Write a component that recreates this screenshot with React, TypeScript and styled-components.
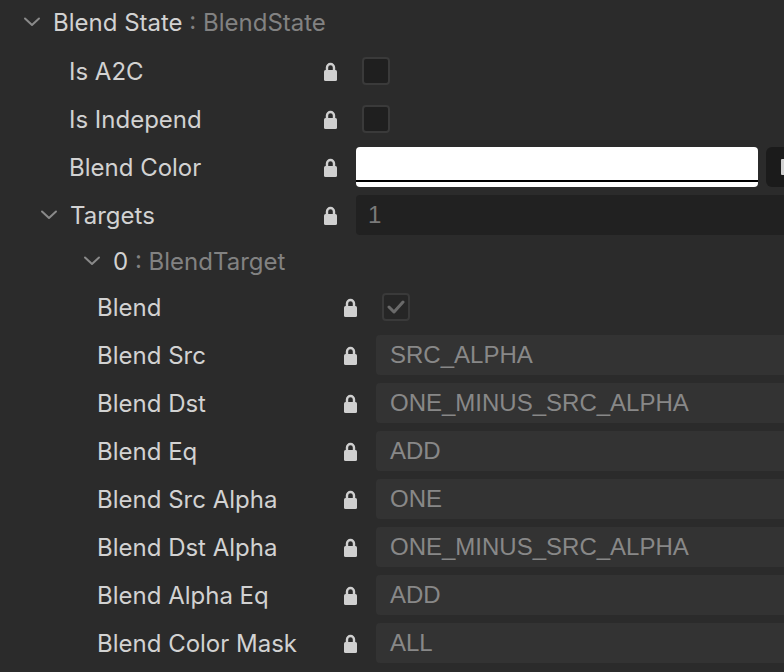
import React from "react";
import styled, { createGlobalStyle } from "styled-components";

const Global = createGlobalStyle`
  html, body { margin: 0; padding: 0; background: #2b2b2b; overflow: hidden; }
  body { width: 784px; height: 672px; }
`;

const Panel = styled.div`
  width: 840px;
  font-family: Inter, "Noto Sans", sans-serif;
  font-size: 24px;
  color: #d2d2d2;
`;

const Children = styled.div<{ $padTop?: number }>`
  display: flex;
  flex-direction: column;
  padding-top: ${(p) => p.$padTop ?? 0}px;
`;

const NodeHeader = styled.div<{ $indent: number }>`
  height: 44px;
  display: flex;
  align-items: center;
  padding-left: ${(p) => p.$indent}px;
  box-sizing: border-box;
`;

const TypeName = styled.span`
  color: #828282;
  white-space: pre;
`;

const ChevronSvg = styled.svg`
  width: 18px;
  height: 10px;
  margin-right: 12px;
  flex: none;
`;

const Row = styled.div`
  height: 48px;
  display: flex;
  align-items: center;
`;

const LabelCell = styled.div<{ $indent: number; $width: number }>`
  width: ${(p) => p.$width}px;
  padding-left: ${(p) => p.$indent}px;
  box-sizing: border-box;
  display: flex;
  align-items: center;
  flex: none;
  white-space: nowrap;
`;

const LockSvg = styled.svg`
  width: 13px;
  height: 19px;
  flex: none;
`;

const ValueCell = styled.div`
  flex: 1;
  margin-left: 19px;
  display: flex;
  align-items: center;
  gap: 8px;
`;

const Checkbox = styled.div<{ $checked?: boolean }>`
  width: 28px;
  height: 28px;
  margin-left: 6px;
  box-sizing: border-box;
  border: 2px solid #3a3a3a;
  border-radius: 4px;
  background: ${(p) => (p.$checked ? "#262626" : "#1f1f1f")};
  display: flex;
  align-items: center;
  justify-content: center;
`;

const Field = styled.div<{ $dark?: boolean }>`
  flex: 1;
  height: 40px;
  border-radius: 4px;
  background: ${(p) => (p.$dark ? "#212121" : "#333333")};
  display: flex;
  align-items: center;
  padding-left: ${(p) => (p.$dark ? 12 : 14)}px;
  box-sizing: border-box;
  font-family: "Liberation Sans", Arial, sans-serif;
  font-size: 24px;
  color: ${(p) => (p.$dark ? "#7a7a7a" : "#888888")};
`;

const ColorSwatch = styled.div`
  width: 402px;
  height: 40px;
  flex: none;
  border-radius: 4px;
  background: linear-gradient(
    to bottom,
    #ffffff 0,
    #ffffff 33px,
    #000000 33px,
    #000000 35px,
    #ffffff 35px
  );
`;

const PickerButton = styled.div`
  width: 60px;
  height: 40px;
  flex: none;
  border-radius: 6px;
  background: #1b1b1b;
  display: flex;
  align-items: center;
  padding-left: 15px;
  box-sizing: border-box;
`;

const PickerIcon = styled.div`
  width: 14px;
  height: 16px;
  background: #d0d0d0;
  border-radius: 1px;
`;

const Chevron = () => (
  <ChevronSvg viewBox="0 0 18 10">
    <path d="M2 1.5 L9 8 L16 1.5" fill="none" stroke="#8a8a8a" strokeWidth="2" strokeLinecap="round" strokeLinejoin="round" />
  </ChevronSvg>
);

const Lock = () => (
  <LockSvg viewBox="0 0 13 19">
    <path d="M3 8 V5.5 A3.5 3.5 0 0 1 10 5.5 V8" fill="none" stroke="#d0d0d0" strokeWidth="2.4" />
    <rect x="0" y="8" width="13" height="11" rx="1.5" fill="#d0d0d0" />
  </LockSvg>
);

const Check = () => (
  <svg width="18" height="14" viewBox="0 0 18 14">
    <path d="M2 7 L7 12 L16 2" fill="none" stroke="#6a6a6a" strokeWidth="3" strokeLinecap="round" strokeLinejoin="round" />
  </svg>
);

type PropRowProps = {
  label: string;
  depth: 1 | 2;
  chevron?: boolean;
  children: React.ReactNode;
};

const PropRow = ({ label, depth, chevron, children }: PropRowProps) => {
  const width = depth === 1 ? 324 : 344;
  const indent = depth === 1 ? (chevron ? 40 : 69) : 97;
  return (
    <Row>
      <LabelCell $indent={indent} $width={width}>
        {chevron && <Chevron />}
        {label}
      </LabelCell>
      <Lock />
      <ValueCell>{children}</ValueCell>
    </Row>
  );
};

const targetProps: [string, string][] = [
  ["Blend Src", "SRC_ALPHA"],
  ["Blend Dst", "ONE_MINUS_SRC_ALPHA"],
  ["Blend Eq", "ADD"],
  ["Blend Src Alpha", "ONE"],
  ["Blend Dst Alpha", "ONE_MINUS_SRC_ALPHA"],
  ["Blend Alpha Eq", "ADD"],
  ["Blend Color Mask", "ALL"],
];

export default function App() {
  return (
    <>
      <Global />
      <Panel>
        <NodeHeader $indent={23}>
          <Chevron />
          Blend State<TypeName> : BlendState</TypeName>
        </NodeHeader>
        <Children $padTop={3}>
          <PropRow label="Is A2C" depth={1}>
            <Checkbox />
          </PropRow>
          <PropRow label="Is Independ" depth={1}>
            <Checkbox />
          </PropRow>
          <PropRow label="Blend Color" depth={1}>
            <ColorSwatch />
            <PickerButton>
              <PickerIcon />
            </PickerButton>
          </PropRow>
          <PropRow label="Targets" depth={1} chevron>
            <Field $dark>1</Field>
          </PropRow>
          <NodeHeader $indent={83}>
            <Chevron />
            0<TypeName> : BlendTarget</TypeName>
          </NodeHeader>
          <PropRow label="Blend" depth={2}>
            <Checkbox $checked>
              <Check />
            </Checkbox>
          </PropRow>
          {targetProps.map(([label, value]) => (
            <PropRow key={label} label={label} depth={2}>
              <Field>{value}</Field>
            </PropRow>
          ))}
        </Children>
      </Panel>
    </>
  );
}
